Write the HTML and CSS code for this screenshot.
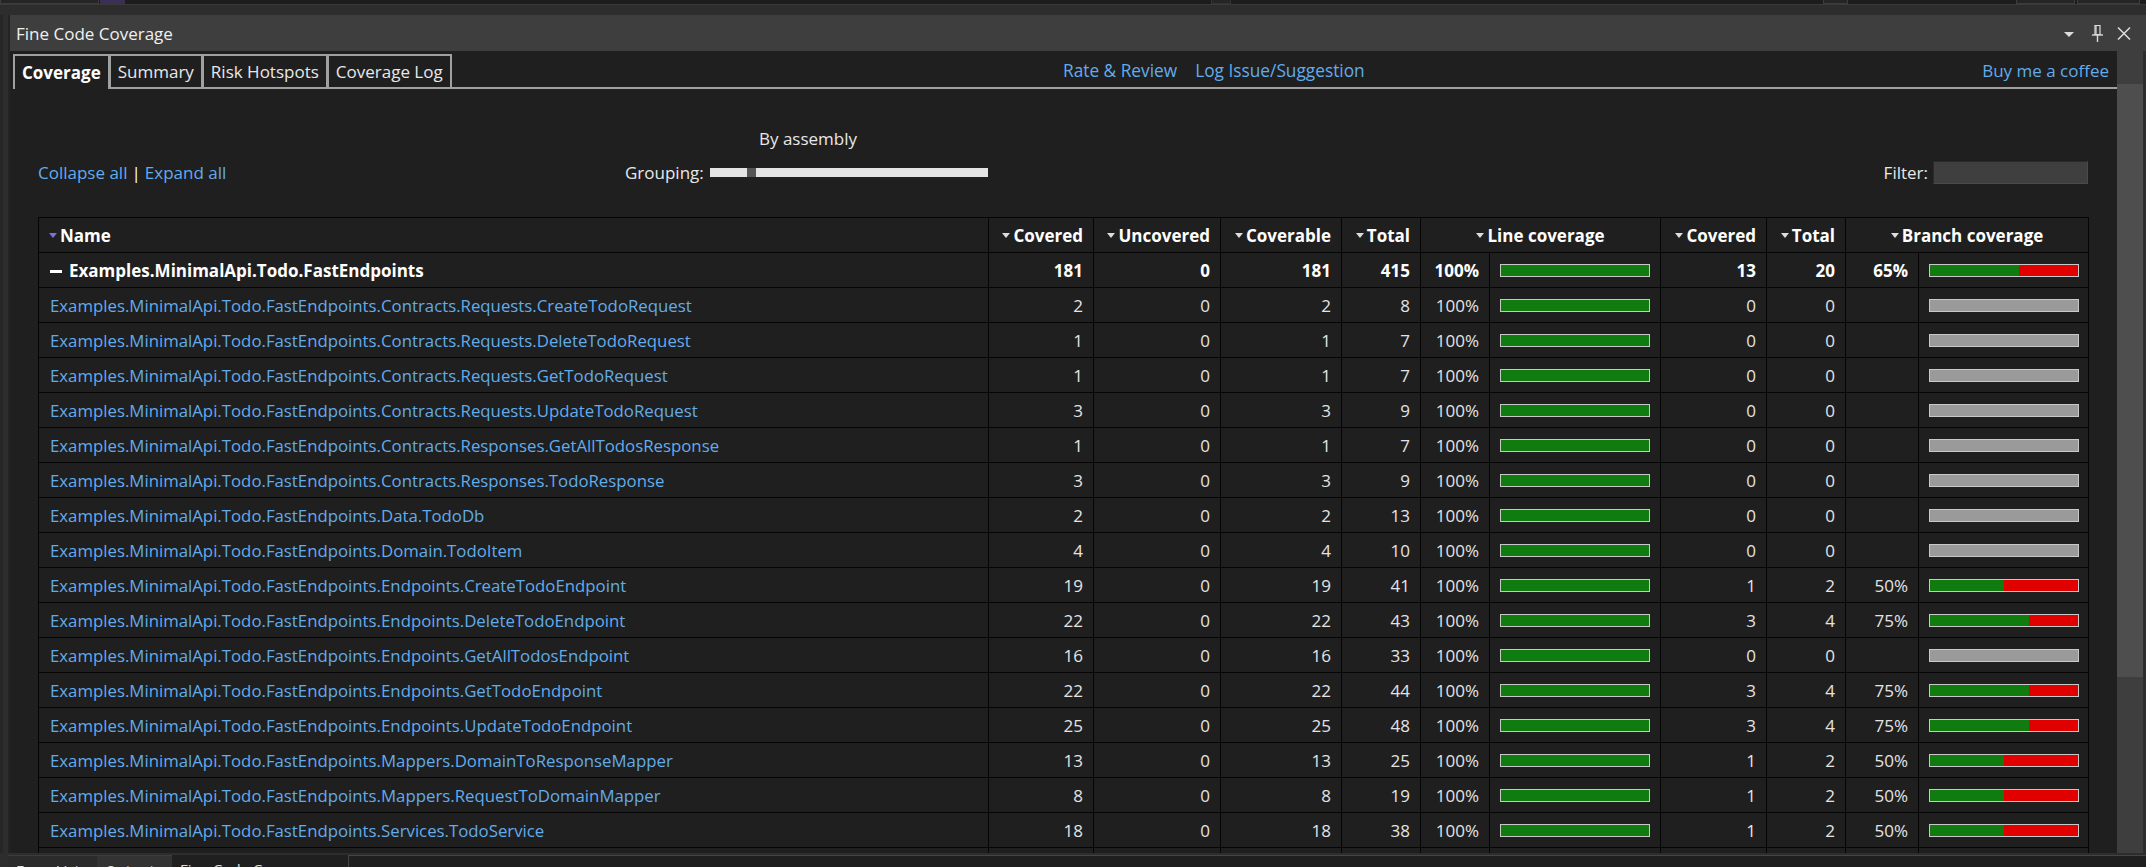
FILE: index.html
```html
<!DOCTYPE html>
<html>
<head>
<meta charset="utf-8">
<title>Fine Code Coverage</title>
<link rel="stylesheet" href="styles.css">
</head>
<body>
<div class="topstrip">
  <div class="editor-edge">
    <div class="ee-box ee-a"></div>
    <div class="ee-mark"></div>
    <div class="ee-box ee-b"></div>
    <div class="ee-box ee-c"></div>
    <div class="ee-box ee-d"></div>
    <div class="ee-box ee-e"></div>
  </div>
</div>
<div class="main">
  <div class="gutter"></div>
  <div class="window">
    <div class="titlebar">
      <span class="title">Fine Code Coverage</span>
      <div class="title-icons">
        <span class="dropdown"></span>
        <svg class="pin" width="11" height="17" viewBox="0 0 11 17"><path d="M3 0.5h5v9H3z" fill="none" stroke="#dcdcdc" stroke-width="1.2"/><path d="M4 1v8.5" stroke="#dcdcdc" stroke-width="1.2"/><path d="M0 10h11" stroke="#dcdcdc" stroke-width="1.4"/><path d="M5.5 10v7" stroke="#dcdcdc" stroke-width="1.4"/></svg>
        <svg class="close" width="14" height="13" viewBox="0 0 14 13"><path d="M1 0.5L13 12.5M13 0.5L1 12.5" stroke="#dcdcdc" stroke-width="1.5"/></svg>
      </div>
    </div>
    <div class="panel">
      <div class="content">
        <div class="tabbar">
          <div class="tabs">
            <div class="tab active">Coverage</div>
            <div class="tab">Summary</div>
            <div class="tab">Risk Hotspots</div>
            <div class="tab">Coverage Log</div>
          </div>
          <div class="links">
            <a class="link">Rate &amp; Review</a>
            <a class="link">Log Issue/Suggestion</a>
          </div>
          <div class="links-right">
            <a class="link">Buy me a coffee</a>
          </div>
        </div>
        <div class="report">
          <div class="controls">
            <div class="collapse"><a class="link">Collapse all</a><span class="sep">|</span><a class="link">Expand all</a></div>
            <div class="grouping">
              <div class="grp-label">By assembly</div>
              <div class="grp-row">
                <span>Grouping:</span>
                <div class="slider"><div class="knob"></div></div>
              </div>
            </div>
            <div></div>
            <div class="filter"><span>Filter:</span><div class="filter-input"></div></div>
          </div>
          <table class="cov">
            <colgroup>
              <col class="c-name"><col class="c-cov"><col class="c-unc"><col class="c-cvb"><col class="c-tot">
              <col class="c-lp"><col class="c-lb"><col class="c-bcov"><col class="c-btot"><col class="c-bp"><col class="c-bb">
            </colgroup>
            <thead>
              <tr>
                <th class="h-name"><span class="tri tri-sorted"></span>Name</th>
                <th class="h-r"><span class="tri"></span>Covered</th>
                <th class="h-r"><span class="tri"></span>Uncovered</th>
                <th class="h-r"><span class="tri"></span>Coverable</th>
                <th class="h-r"><span class="tri"></span>Total</th>
                <th class="h-c" colspan="2"><span class="tri"></span>Line coverage</th>
                <th class="h-r"><span class="tri"></span>Covered</th>
                <th class="h-r"><span class="tri"></span>Total</th>
                <th class="h-c" colspan="2"><span class="tri"></span>Branch coverage</th>
              </tr>
            </thead>
            <tbody>
              <tr class="asm">
                <td class="name"><span class="minus"></span>Examples.MinimalApi.Todo.FastEndpoints</td>
                <td class="num">181</td><td class="num">0</td><td class="num">181</td><td class="num">415</td>
                <td class="pct">100%</td><td class="barcell"><div class="bar"><div class="g" style="width:100%"></div></div></td>
                <td class="num">13</td><td class="num">20</td>
                <td class="pct">65%</td><td class="barcell"><div class="bar"><div class="g" style="width:60%"></div><div class="r"></div></div></td>
              </tr>
              <tr>
                <td class="name"><a class="link">Examples.MinimalApi.Todo.FastEndpoints.Contracts.Requests.CreateTodoRequest</a></td>
                <td class="num">2</td><td class="num">0</td><td class="num">2</td><td class="num">8</td>
                <td class="pct">100%</td><td class="barcell"><div class="bar"><div class="g" style="width:100%"></div></div></td>
                <td class="num">0</td><td class="num">0</td>
                <td class="pct"></td><td class="barcell"><div class="bar none"></div></td>
              </tr>
              <tr>
                <td class="name"><a class="link">Examples.MinimalApi.Todo.FastEndpoints.Contracts.Requests.DeleteTodoRequest</a></td>
                <td class="num">1</td><td class="num">0</td><td class="num">1</td><td class="num">7</td>
                <td class="pct">100%</td><td class="barcell"><div class="bar"><div class="g" style="width:100%"></div></div></td>
                <td class="num">0</td><td class="num">0</td>
                <td class="pct"></td><td class="barcell"><div class="bar none"></div></td>
              </tr>
              <tr>
                <td class="name"><a class="link">Examples.MinimalApi.Todo.FastEndpoints.Contracts.Requests.GetTodoRequest</a></td>
                <td class="num">1</td><td class="num">0</td><td class="num">1</td><td class="num">7</td>
                <td class="pct">100%</td><td class="barcell"><div class="bar"><div class="g" style="width:100%"></div></div></td>
                <td class="num">0</td><td class="num">0</td>
                <td class="pct"></td><td class="barcell"><div class="bar none"></div></td>
              </tr>
              <tr>
                <td class="name"><a class="link">Examples.MinimalApi.Todo.FastEndpoints.Contracts.Requests.UpdateTodoRequest</a></td>
                <td class="num">3</td><td class="num">0</td><td class="num">3</td><td class="num">9</td>
                <td class="pct">100%</td><td class="barcell"><div class="bar"><div class="g" style="width:100%"></div></div></td>
                <td class="num">0</td><td class="num">0</td>
                <td class="pct"></td><td class="barcell"><div class="bar none"></div></td>
              </tr>
              <tr>
                <td class="name"><a class="link">Examples.MinimalApi.Todo.FastEndpoints.Contracts.Responses.GetAllTodosResponse</a></td>
                <td class="num">1</td><td class="num">0</td><td class="num">1</td><td class="num">7</td>
                <td class="pct">100%</td><td class="barcell"><div class="bar"><div class="g" style="width:100%"></div></div></td>
                <td class="num">0</td><td class="num">0</td>
                <td class="pct"></td><td class="barcell"><div class="bar none"></div></td>
              </tr>
              <tr>
                <td class="name"><a class="link">Examples.MinimalApi.Todo.FastEndpoints.Contracts.Responses.TodoResponse</a></td>
                <td class="num">3</td><td class="num">0</td><td class="num">3</td><td class="num">9</td>
                <td class="pct">100%</td><td class="barcell"><div class="bar"><div class="g" style="width:100%"></div></div></td>
                <td class="num">0</td><td class="num">0</td>
                <td class="pct"></td><td class="barcell"><div class="bar none"></div></td>
              </tr>
              <tr>
                <td class="name"><a class="link">Examples.MinimalApi.Todo.FastEndpoints.Data.TodoDb</a></td>
                <td class="num">2</td><td class="num">0</td><td class="num">2</td><td class="num">13</td>
                <td class="pct">100%</td><td class="barcell"><div class="bar"><div class="g" style="width:100%"></div></div></td>
                <td class="num">0</td><td class="num">0</td>
                <td class="pct"></td><td class="barcell"><div class="bar none"></div></td>
              </tr>
              <tr>
                <td class="name"><a class="link">Examples.MinimalApi.Todo.FastEndpoints.Domain.TodoItem</a></td>
                <td class="num">4</td><td class="num">0</td><td class="num">4</td><td class="num">10</td>
                <td class="pct">100%</td><td class="barcell"><div class="bar"><div class="g" style="width:100%"></div></div></td>
                <td class="num">0</td><td class="num">0</td>
                <td class="pct"></td><td class="barcell"><div class="bar none"></div></td>
              </tr>
              <tr>
                <td class="name"><a class="link">Examples.MinimalApi.Todo.FastEndpoints.Endpoints.CreateTodoEndpoint</a></td>
                <td class="num">19</td><td class="num">0</td><td class="num">19</td><td class="num">41</td>
                <td class="pct">100%</td><td class="barcell"><div class="bar"><div class="g" style="width:100%"></div></div></td>
                <td class="num">1</td><td class="num">2</td>
                <td class="pct">50%</td><td class="barcell"><div class="bar"><div class="g" style="width:50%"></div><div class="r"></div></div></td>
              </tr>
              <tr>
                <td class="name"><a class="link">Examples.MinimalApi.Todo.FastEndpoints.Endpoints.DeleteTodoEndpoint</a></td>
                <td class="num">22</td><td class="num">0</td><td class="num">22</td><td class="num">43</td>
                <td class="pct">100%</td><td class="barcell"><div class="bar"><div class="g" style="width:100%"></div></div></td>
                <td class="num">3</td><td class="num">4</td>
                <td class="pct">75%</td><td class="barcell"><div class="bar"><div class="g" style="width:67%"></div><div class="r"></div></div></td>
              </tr>
              <tr>
                <td class="name"><a class="link">Examples.MinimalApi.Todo.FastEndpoints.Endpoints.GetAllTodosEndpoint</a></td>
                <td class="num">16</td><td class="num">0</td><td class="num">16</td><td class="num">33</td>
                <td class="pct">100%</td><td class="barcell"><div class="bar"><div class="g" style="width:100%"></div></div></td>
                <td class="num">0</td><td class="num">0</td>
                <td class="pct"></td><td class="barcell"><div class="bar none"></div></td>
              </tr>
              <tr>
                <td class="name"><a class="link">Examples.MinimalApi.Todo.FastEndpoints.Endpoints.GetTodoEndpoint</a></td>
                <td class="num">22</td><td class="num">0</td><td class="num">22</td><td class="num">44</td>
                <td class="pct">100%</td><td class="barcell"><div class="bar"><div class="g" style="width:100%"></div></div></td>
                <td class="num">3</td><td class="num">4</td>
                <td class="pct">75%</td><td class="barcell"><div class="bar"><div class="g" style="width:67%"></div><div class="r"></div></div></td>
              </tr>
              <tr>
                <td class="name"><a class="link">Examples.MinimalApi.Todo.FastEndpoints.Endpoints.UpdateTodoEndpoint</a></td>
                <td class="num">25</td><td class="num">0</td><td class="num">25</td><td class="num">48</td>
                <td class="pct">100%</td><td class="barcell"><div class="bar"><div class="g" style="width:100%"></div></div></td>
                <td class="num">3</td><td class="num">4</td>
                <td class="pct">75%</td><td class="barcell"><div class="bar"><div class="g" style="width:67%"></div><div class="r"></div></div></td>
              </tr>
              <tr>
                <td class="name"><a class="link">Examples.MinimalApi.Todo.FastEndpoints.Mappers.DomainToResponseMapper</a></td>
                <td class="num">13</td><td class="num">0</td><td class="num">13</td><td class="num">25</td>
                <td class="pct">100%</td><td class="barcell"><div class="bar"><div class="g" style="width:100%"></div></div></td>
                <td class="num">1</td><td class="num">2</td>
                <td class="pct">50%</td><td class="barcell"><div class="bar"><div class="g" style="width:50%"></div><div class="r"></div></div></td>
              </tr>
              <tr>
                <td class="name"><a class="link">Examples.MinimalApi.Todo.FastEndpoints.Mappers.RequestToDomainMapper</a></td>
                <td class="num">8</td><td class="num">0</td><td class="num">8</td><td class="num">19</td>
                <td class="pct">100%</td><td class="barcell"><div class="bar"><div class="g" style="width:100%"></div></div></td>
                <td class="num">1</td><td class="num">2</td>
                <td class="pct">50%</td><td class="barcell"><div class="bar"><div class="g" style="width:50%"></div><div class="r"></div></div></td>
              </tr>
              <tr>
                <td class="name"><a class="link">Examples.MinimalApi.Todo.FastEndpoints.Services.TodoService</a></td>
                <td class="num">18</td><td class="num">0</td><td class="num">18</td><td class="num">38</td>
                <td class="pct">100%</td><td class="barcell"><div class="bar"><div class="g" style="width:100%"></div></div></td>
                <td class="num">1</td><td class="num">2</td>
                <td class="pct">50%</td><td class="barcell"><div class="bar"><div class="g" style="width:50%"></div><div class="r"></div></div></td>
              </tr>
              <tr class="partial">
                <td class="name"></td>
                <td class="num"></td><td class="num"></td><td class="num"></td><td class="num"></td>
                <td class="pct"></td><td class="barcell"></td>
                <td class="num"></td><td class="num"></td>
                <td class="pct"></td><td class="barcell"></td>
              </tr>
            </tbody>
          </table>
        </div>
      </div>
      <div class="scrollbar"><div class="thumb"></div></div>
    </div>
  </div>
</div>
<div class="bottombar">
  <div class="btab">Error List</div>
  <div class="btab btab-out">Output</div>
  <div class="btab btab-active">Fine Code Coverage</div>
  <div class="bfill"></div>
</div>
</body>
</html>
```
FILE: styles.css
```css
* { box-sizing: border-box; }
html, body { margin: 0; padding: 0; }
body {
  width: 2146px;
  height: 867px;
  overflow: hidden;
  background: #2d2d2d;
  font-family: "Segoe UI", "Open Sans", "Noto Sans", sans-serif;
  font-size: 17px;
  color: #f1f1f1;
}

/* top remnant of editor */
.topstrip { height: 15px; }
.editor-edge {
  height: 5px;
  background: #1c1c1c;
  border-bottom: 1px solid #3a3a3a;
  display: flex;
}
.ee-box { height: 4px; border: 1px solid #3c3c3c; border-top: 0; background: #252526; }
.ee-a { width: 99px; }
.ee-mark { width: 25px; height: 4px; background: #3a2f55; margin-left: 1px; }
.ee-b { width: 20px; margin-left: 1086px; border-color: #333; }
.ee-c { width: 25px; margin-left: 592px; }
.ee-d { width: 59px; margin-left: 168px; }
.ee-e { width: 63px; margin-left: 2px; }

.main { display: flex; height: 838px; }
.gutter {
  width: 10px;
  background: #2d2d2d;
  border-left: 3px solid #262626;
  border-right: 2px solid #242424;
}
.window { flex: 1; display: flex; flex-direction: column; min-width: 0; }

.titlebar {
  height: 36px;
  background: #3e3e3e;
  display: flex;
  align-items: center;
  padding: 0 15px 0 6px;
  flex: none;
}
.title { color: #f0f0f0; font-size: 17px; }
.title-icons { margin-left: auto; display: flex; align-items: center; }
.dropdown {
  width: 0; height: 0;
  border-left: 5px solid transparent;
  border-right: 5px solid transparent;
  border-top: 5px solid #dcdcdc;
  margin-top: 2px;
}
.pin { margin-left: 18px; }
.close { margin-left: 14px; }

.panel { flex: 1; display: flex; min-height: 0; padding-right: 3px; }
.content {
  flex: 1;
  background: #1f1f1f;
  overflow: hidden;
  padding: 3px 0 0 3px;
  min-width: 0;
}
.scrollbar { width: 26px; background: #3e3e3e; flex: none; }
.thumb { margin-top: 33px; height: 593px; background: #4e4e4e; }

.link { color: #62acec; text-decoration: none; }

/* tab bar */
.tabbar {
  height: 35px;
  display: grid;
  grid-template-columns: 1050px auto 1fr;
  align-items: center;
  border-bottom: 2px solid #a0a0a0;
}
.tabs { display: flex; align-self: end; height: 33px; }
.tab {
  height: 33px;
  border: 2px solid #a0a0a0;
  border-bottom: 0;
  padding: 0 7px;
  display: flex;
  align-items: center;
  color: #e8e8e8;
  white-space: nowrap;
}
.tab + .tab { margin-left: -1px; }
.tab.active {
  font-weight: bold;
  color: #ffffff;
  height: 35px;
  margin-bottom: -2px;
  background: #1f1f1f;
  align-self: flex-start;
}
.links { display: flex; gap: 18px; font-size: 17.3px; }
.links-right { justify-self: end; padding-right: 8px; }

/* report area */
.report { padding: 0 29px 0 25px; }
.controls {
  height: 128px;
  display: grid;
  grid-template-columns: 587px auto 1fr auto;
  align-items: end;
  padding-bottom: 33px;
}
.collapse { height: 23px; display: flex; align-items: center; }
.sep { color: #ffffff; margin: 0 4px; }
.grouping { display: flex; flex-direction: column; }
.grp-label { margin-left: 134px; line-height: 22px; margin-bottom: 11px; color: #e8e8e8; }
.grp-row { display: flex; align-items: center; height: 23px; gap: 6px; color: #e8e8e8; }
.slider { width: 278px; height: 9px; background: #e4e4e4; display: flex; }
.knob { margin-left: 37px; width: 9px; height: 9px; background: #555555; }
.filter { display: flex; align-items: center; gap: 5px; height: 23px; color: #e8e8e8; }
.filter-input {
  width: 155px;
  height: 23px;
  background: #3f3f3f;
  border-top: 1px solid #2a2a2a;
  border-left: 1px solid #2a2a2a;
  border-right: 1px solid #4a4a4a;
  border-bottom: 1px solid #4a4a4a;
}

/* table */
.cov {
  width: 2050px;
  border-collapse: collapse;
  table-layout: fixed;
  border: 1px solid #050505;
}
.c-name { width: 950px; }
.c-cov { width: 105px; }
.c-unc { width: 127px; }
.c-cvb { width: 121px; }
.c-tot { width: 79px; }
.c-lp { width: 69px; }
.c-lb { width: 171px; }
.c-bcov { width: 106px; }
.c-btot { width: 79px; }
.c-bp { width: 73px; }
.c-bb { width: 170px; }

.cov th, .cov td {
  border: 1px solid #050505;
  height: 35px;
  padding: 0 10px;
  white-space: nowrap;
  overflow: hidden;
}
.cov th { font-weight: bold; color: #ffffff; }
.h-name { text-align: left; padding-left: 18px; }
.h-r { text-align: right; }
.h-c { text-align: center; }
.tri {
  display: inline-block;
  width: 0; height: 0;
  border-left: 4px solid transparent;
  border-right: 4px solid transparent;
  border-top: 5px solid #dddddd;
  vertical-align: middle;
  margin-right: 3px;
  margin-top: -2px;
}
.tri-sorted { border-top-color: #7f6ee0; }

.cov td { color: #e4e4e4; }
.cov td.name { padding-left: 11px; font-size: 16.8px; }
.num, .pct { text-align: right; }
.asm td { font-weight: bold; color: #ffffff; }
.asm td.name { font-size: 17px; }
.minus {
  display: inline-block;
  width: 12px;
  height: 3px;
  background: #ffffff;
  vertical-align: middle;
  margin-right: 7px;
}
.barcell { padding-left: 10px; }
.bar {
  width: 150px;
  height: 13px;
  border: 1px solid #c8c8c8;
  display: flex;
  background: #d80a0a;
}
.bar .g { height: 100%; background: #107c10; }
.bar .r { flex: 1; background: #e00000; }
.bar.none { background: #9a9a9a; }

/* bottom bar */
.bottombar {
  height: 14px;
  display: flex;
  padding-left: 8px;
  padding-top: 2px;
  background: #2d2d2d;
  overflow: hidden;
}
.btab {
  width: 89px;
  padding: 4px 0 0 8px;
  background: #2b2b2b;
  border-top: 1px solid #3c3c3c;
  font-size: 15px;
  color: #e0e0e0;
  white-space: nowrap;
  line-height: 20px;
}
.btab-out { width: 75px; background: #333333; }
.btab-active { width: 176px; background: #1f1f1f; border-top: 0; }
.bfill { flex: 1; border-top: 1px solid #454545; border-left: 1px solid #454545; background: #1f1f1f; }
```
